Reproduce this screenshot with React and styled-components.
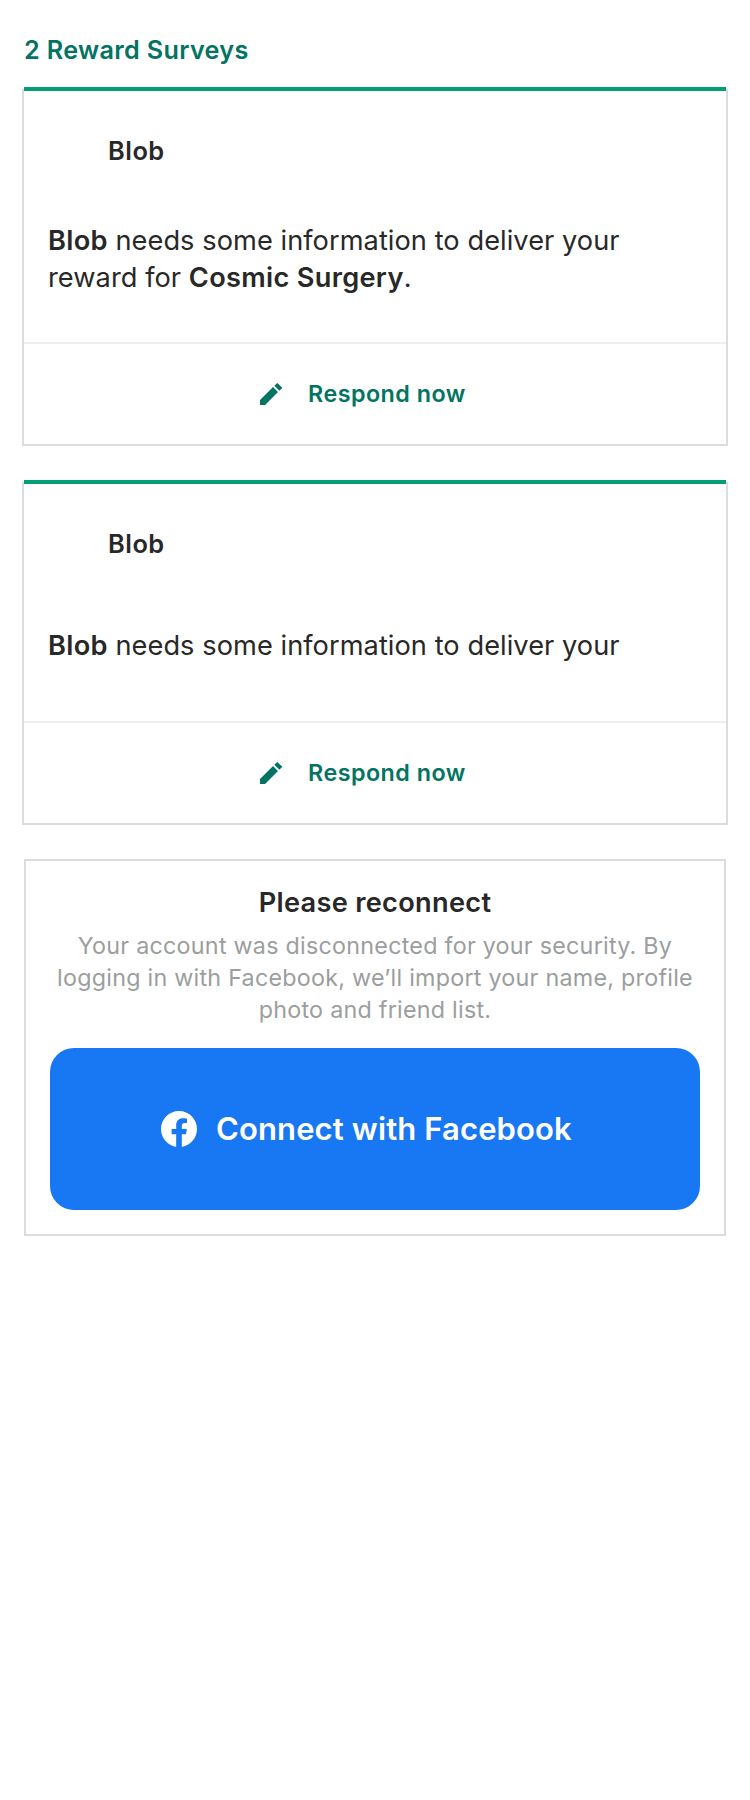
import React from 'react';
import styled, { createGlobalStyle } from 'styled-components';

const GlobalStyle = createGlobalStyle`
  * { box-sizing: border-box; }
  body {
    margin: 0;
    background: #fff;
    color: #282828;
    font-family: Inter, "Liberation Sans", sans-serif;
    -webkit-font-smoothing: antialiased;
  }
`;

const Page = styled.main`
  min-height: 1800px;
  padding: 34px 24px 0;
  display: flex;
  flex-direction: column;
`;

const Heading = styled.h1`
  margin: 0 0 23px;
  font-size: 25.2px;
  line-height: 32px;
  font-weight: 600;
  letter-spacing: 0.33px;
  color: #037362;
`;

const SurveyCard = styled.section`
  position: relative;
  margin: 0 -2px 36px;
  border: solid #dcdcdc;
  border-width: 0 2px 2px;

  &::before {
    content: '';
    position: absolute;
    top: -2px;
    left: 0;
    right: 0;
    height: 4px;
    background: #029e74;
  }
`;

const Creator = styled.h2`
  margin: 0;
  padding: 46px 24px 0 84px;
  font-size: 25.4px;
  line-height: 32px;
  font-weight: 600;
  letter-spacing: 0.5px;
`;

const Message = styled.p`
  margin: 0;
  height: ${(p) => p.$height}px;
  padding: ${(p) => p.$top}px 24px 0;
  font-size: 27.2px;
  line-height: 37px;
  letter-spacing: 0.06px;
`;

const Strong = styled.strong`
  font-weight: 600;
  letter-spacing: 0.3px;
`;

const RespondButton = styled.button`
  display: flex;
  align-items: center;
  gap: 26px;
  width: 100%;
  height: 102px;
  padding: 0 0 0 236px;
  border: 0;
  border-top: 2px solid #eeeef2;
  background: none;
  color: #037362;
  font: 600 23.3px/32px Inter, "Liberation Sans", sans-serif;
  letter-spacing: 0.48px;

  svg { overflow: visible; }
`;

const ReconnectCard = styled.section`
  margin-top: -2px;
  padding: 24px;
  border: 2px solid #dcdcdc;
  text-align: center;
`;

const ReconnectTitle = styled.h2`
  margin: 0 0 9px;
  font-size: 27.2px;
  line-height: 36px;
  font-weight: 600;
  letter-spacing: 0.29px;
`;

const ReconnectText = styled.p`
  margin: 0 0 22px;
  font-size: 23.3px;
  line-height: 32px;
  letter-spacing: 0.25px;
  color: #9b9e9e;
`;

const FacebookButton = styled.button`
  display: flex;
  align-items: center;
  gap: 19px;
  width: 100%;
  height: 162px;
  padding: 0 0 0 111px;
  border: 0;
  border-radius: 24px;
  background: #1877f2;
  color: #fff;
  font: 600 31px/40px Inter, "Liberation Sans", sans-serif;
  letter-spacing: 0.12px;
`;

const PencilIcon = () => (
  <svg width="22" height="22" viewBox="0 0 22 22" fill="currentColor" aria-hidden="true">
    <path d="M0 16.9V22h5L18 9l-5-5zM14.4 2.8l2.9-2.9 5 4.9-2.9 2.9z" />
  </svg>
);

const FacebookIcon = () => (
  <svg width="36" height="36" viewBox="0 0 24 24" fill="currentColor" aria-hidden="true">
    <path d="M24 12.073c0-6.627-5.373-12-12-12s-12 5.373-12 12c0 5.99 4.388 10.954 10.125 11.854v-8.385H7.078v-3.47h3.047V9.43c0-3.007 1.792-4.669 4.533-4.669 1.312 0 2.686.235 2.686.235v2.953H15.83c-1.491 0-1.956.925-1.956 1.874v2.25h3.328l-.532 3.47h-2.796v8.385C19.612 23.027 24 18.062 24 12.073z" />
  </svg>
);

function Survey({ creator, top, height, children }) {
  return (
    <SurveyCard>
      <Creator>{creator}</Creator>
      <Message $top={top} $height={height}>{children}</Message>
      <RespondButton>
        <PencilIcon />
        Respond now
      </RespondButton>
    </SurveyCard>
  );
}

export default function App() {
  return (
    <>
      <GlobalStyle />
      <Page>
        <Heading>2 Reward Surveys</Heading>
        <Survey creator="Blob" top={55} height={175}>
          <Strong>Blob</Strong> needs some information to deliver your reward for{' '}
          <Strong>Cosmic Surgery</Strong>.
        </Survey>
        <Survey creator="Blob" top={67} height={161}>
          <Strong>Blob</Strong> needs some information to deliver your
        </Survey>
        <ReconnectCard>
          <ReconnectTitle>Please reconnect</ReconnectTitle>
          <ReconnectText>
            Your account was disconnected for your security. By logging in with Facebook, we’ll
            import your name, profile photo and friend list.
          </ReconnectText>
          <FacebookButton>
            <FacebookIcon />
            Connect with Facebook
          </FacebookButton>
        </ReconnectCard>
      </Page>
    </>
  );
}
